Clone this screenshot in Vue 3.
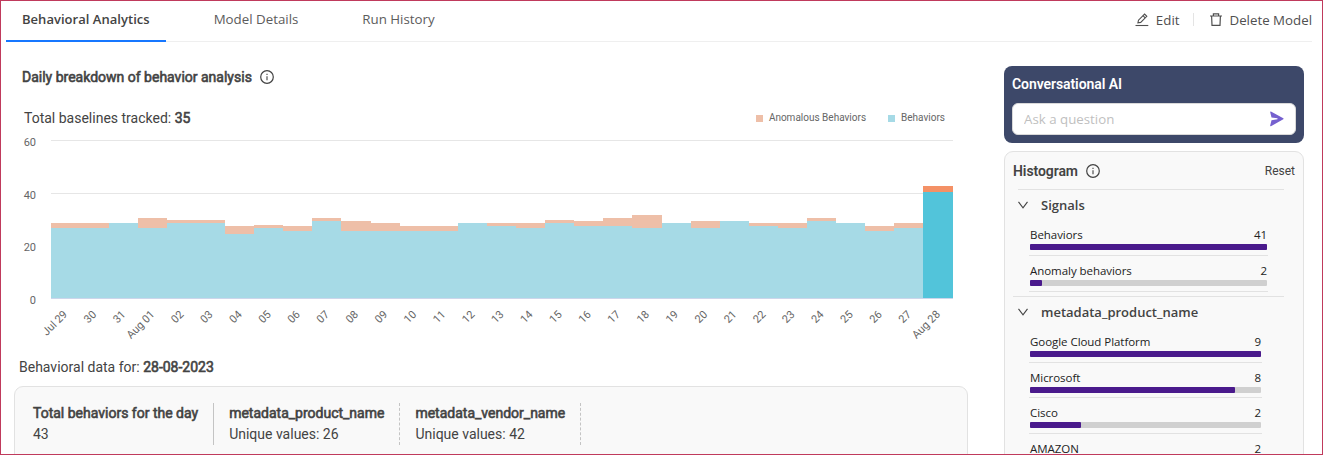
<script setup>
import { ref } from 'vue'

const tabs = ['Behavioral Analytics', 'Model Details', 'Run History']
const activeTab = ref(tabs[0])
const question = ref('')

// [label, behaviors, behaviors + anomalies]
const days = [
  ['Jul 29', 26.6, 28.5],
  ['30', 26.6, 28.5],
  ['31', 28.5, 28.5],
  ['Aug 01', 26.6, 30.4],
  ['02', 28.5, 29.6],
  ['03', 28.5, 29.6],
  ['04', 24.3, 27.3],
  ['05', 26.6, 27.7],
  ['06', 25.4, 27.3],
  ['07', 29.2, 30.4],
  ['08', 25.4, 29.2],
  ['09', 25.4, 28.5],
  ['10', 25.4, 27.3],
  ['11', 25.4, 27.3],
  ['12', 28.5, 28.5],
  ['13', 27.3, 28.5],
  ['14', 26.6, 28.5],
  ['15', 28.5, 29.6],
  ['16', 27.3, 29.2],
  ['17', 27.3, 30.4],
  ['18', 26.6, 31.5],
  ['19', 28.5, 28.5],
  ['20', 26.6, 29.2],
  ['21', 29.2, 29.2],
  ['22', 27.3, 28.5],
  ['23', 26.6, 28.5],
  ['24', 29.2, 30.4],
  ['25', 28.5, 28.5],
  ['26', 25.4, 27.3],
  ['27', 26.6, 28.5],
  ['Aug 28', 40.3, 42.5],
]

const plot = { left: 36, width: 902, base: 168, height: 158, max: 60 }
const band = plot.width / days.length

const toY = (v) => plot.base - Math.round((v / plot.max) * plot.height)
const toX = (i) => (i === days.length ? plot.left + plot.width : Math.floor(plot.left + i * band))

const bars = days.map(([label, behaviors, total], i) => ({
  label,
  x: toX(i),
  width: toX(i + 1) - toX(i),
  labelX: plot.left + (i + 0.5) * band + 2.4,
  behaviorsY: toY(behaviors),
  totalY: toY(total),
  active: i === days.length - 1,
}))

const ticks = [
  { label: '60', y: 10 },
  { label: '40', y: 63 },
  { label: '20', y: 115 },
  { label: '0', y: 168 },
]

const stats = [
  { title: 'Total behaviors for the day', value: '43' },
  { title: 'metadata_product_name', value: 'Unique values: 26' },
  { title: 'metadata_vendor_name', value: 'Unique values: 42' },
]

const groups = [
  {
    name: 'Signals',
    rows: [
      { label: 'Behaviors', count: 41, pct: 100 },
      { label: 'Anomaly behaviors', count: 2, pct: 5 },
    ],
  },
  {
    name: 'metadata_product_name',
    narrow: true,
    rows: [
      { label: 'Google Cloud Platform', count: 9, pct: 100 },
      { label: 'Microsoft', count: 8, pct: 88.8 },
      { label: 'Cisco', count: 2, pct: 22.1 },
      { label: 'AMAZON', count: 2, pct: 22.1 },
    ],
  },
]
</script>

<template>
  <div class="page">
    <!-- Tabs + actions -->
    <header class="topbar">
      <nav class="tabs" role="tablist">
        <button
          v-for="t in tabs"
          :key="t"
          class="tab"
          :class="{ 'tab--active': activeTab === t }"
          role="tab"
          :aria-selected="activeTab === t"
          @click="activeTab = t"
        >{{ t }}</button>
      </nav>
      <div class="actions">
        <button class="action">
          <svg width="14" height="14" viewBox="0 0 14 14" fill="none" stroke="currentColor" stroke-width="1.1">
            <path d="M0.5 12.5H13.3" />
            <path d="M2.9 9.9L3.5 7.2L9.6 1.1L11.8 3.3L5.7 9.4L2.9 9.9Z" />
            <path d="M8 2.7L10.2 4.9" />
          </svg>
          <span>Edit</span>
        </button>
        <span class="divider" />
        <button class="action">
          <svg width="12" height="14" viewBox="0 0 12 14" fill="none" stroke="currentColor" stroke-width="1.2">
            <path d="M0 3H12M3.4 3V0.9H8.6V3M1.6 3L2 12.3H10L10.4 3" />
          </svg>
          <span>Delete Model</span>
        </button>
      </div>
    </header>

    <div class="body">
      <!-- Chart column -->
      <main class="main">
        <h2 class="heading">
          <span>Daily breakdown of behavior analysis</span>
          <svg class="info" width="14" height="14" viewBox="0 0 14 14" fill="none" stroke="currentColor">
            <circle cx="7" cy="7" r="6.3" stroke-width="1.2" />
            <path d="M7 6.2V10.3M7 3.7V4.9" stroke-width="1.1" />
          </svg>
        </h2>

        <div class="chart-head">
          <p class="baselines">Total baselines tracked: <b>35</b></p>
          <ul class="legend">
            <li><i class="swatch swatch--anomalous" />Anomalous Behaviors</li>
            <li><i class="swatch swatch--behaviors" />Behaviors</li>
          </ul>
        </div>

        <svg class="chart" width="953" height="215" viewBox="0 0 953 215">
          <g shape-rendering="crispEdges">
            <rect v-for="t in ticks" :key="t.label" class="grid" x="36" :y="t.y" width="902" height="1" />
            <g v-for="b in bars" :key="b.label" :class="{ 'bar--active': b.active }">
              <rect class="bar-anomalous" :x="b.x" :y="b.totalY" :width="b.width" :height="b.behaviorsY - b.totalY" />
              <rect class="bar-behaviors" :x="b.x" :y="b.behaviorsY" :width="b.width" :height="plot.base - b.behaviorsY" />
            </g>
            <rect class="axis" x="36" y="168" width="902" height="1" />
          </g>
          <text v-for="t in ticks" :key="t.label" class="tick" x="21" :y="t.y + 5.5" text-anchor="end">{{ t.label }}</text>
          <text
            v-for="b in bars"
            :key="b.label"
            class="tick"
            text-anchor="end"
            :transform="`translate(${b.labelX} 185) rotate(-45)`"
          >{{ b.label }}</text>
        </svg>

        <p class="date">Behavioral data for: <b>28-08-2023</b></p>

        <section class="stats">
          <div v-for="s in stats" :key="s.title" class="stat">
            <b>{{ s.title }}</b>
            <span>{{ s.value }}</span>
          </div>
        </section>
      </main>

      <!-- Sidebar -->
      <aside class="side">
        <section class="ai">
          <h3 class="ai-title">Conversational AI</h3>
          <div class="ask">
            <input v-model="question" class="ask-input" placeholder="Ask a question" />
            <svg width="14" height="16" viewBox="0 0 14 16" fill="#7560cf">
              <path d="M0.9 0.5L13.3 7.2Q14 7.7 13.3 8.2L0.9 15.2Q0 15.5 0.2 14.5L1.5 9.2L7.5 8.3V7.2L1.5 6.4L0.2 1.2Q0 0.2 0.9 0.5Z" />
            </svg>
          </div>
        </section>

        <section class="hist">
          <div class="hist-head">
            <h3 class="hist-title">Histogram</h3>
            <svg class="info" width="14" height="14" viewBox="0 0 14 14" fill="none" stroke="currentColor">
              <circle cx="7" cy="7" r="6.3" stroke-width="1.2" />
              <path d="M7 6.2V10.3M7 3.7V4.9" stroke-width="1.1" />
            </svg>
            <button class="reset">Reset</button>
          </div>

          <div v-for="g in groups" :key="g.name" class="group" :class="{ 'group--narrow': g.narrow }">
            <div class="group-head">
              <svg width="10" height="8" viewBox="0 0 10 8" fill="none" stroke="currentColor" stroke-width="1.1">
                <path d="M0.5 0.8L5 6.8L9.5 0.8" />
              </svg>
              <span class="group-name">{{ g.name }}</span>
            </div>
            <div class="rows">
              <div v-for="r in g.rows" :key="r.label" class="row">
                <div class="row-text"><span>{{ r.label }}</span><span>{{ r.count }}</span></div>
                <div class="track"><div class="fill" :style="{ width: r.pct + '%' }" /></div>
              </div>
            </div>
          </div>
        </section>
      </aside>
    </div>
  </div>
</template>

<style>
body {
  background: #fff;
}
</style>

<style scoped>
.page {
  box-sizing: border-box;
  width: 1323px;
  height: 455px;
  border: 1px solid #c03a5c;
  overflow: hidden;
  background: #fff;
  color: #434343;
  font-family: Roboto, "Liberation Sans", sans-serif;
  font-size: 14px;
}

h2, h3, p, ul {
  margin: 0;
  padding: 0;
}

button {
  padding: 0;
  border: 0;
  background: none;
  color: inherit;
  font: inherit;
  cursor: pointer;
}

/* Top bar */
.topbar {
  display: flex;
  justify-content: space-between;
  box-sizing: border-box;
  height: 41px;
  margin: 0 10px 0 5px;
  border-bottom: 1px solid #efefef;
  font-family: "Open Sans", "Noto Sans", sans-serif;
  font-size: 13.3px;
}

.tabs {
  display: flex;
  gap: 32px;
}

.tab {
  box-sizing: border-box;
  height: 41px;
  padding: 0 16px 4px;
  border-bottom: 2px solid transparent;
  color: #5c5c5c;
  white-space: nowrap;
}

.tab--active {
  border-bottom-color: #1677ff;
  color: #434343;
  font-size: 13px;
  font-weight: 600;
  letter-spacing: 0.03px;
}

.actions {
  display: flex;
  align-items: center;
  height: 37px;
}

.action {
  display: flex;
  align-items: center;
  gap: 7px;
  color: #505050;
}

.divider {
  width: 1px;
  height: 13px;
  margin: 0 16px 0 14px;
  background: #e4e4e4;
}

/* Layout */
.body {
  display: flex;
  justify-content: space-between;
  padding: 0 18px 0 13px;
}

.main {
  width: 954px;
}

.heading {
  display: flex;
  align-items: center;
  gap: 8px;
  height: 20px;
  margin: 25px 0 0 8px;
  font-size: 14px;
}

/* Heavier strokes on the regular face keep its narrower widths */
.heading,
b {
  font-weight: 400;
  -webkit-text-stroke: 0.6px currentColor;
}

.info {
  color: #434343;
}

.chart-head {
  display: flex;
  justify-content: space-between;
  margin: 21px 23px 0 10px;
  height: 20px;
  line-height: 20px;
}

.legend {
  display: flex;
  gap: 22px;
  color: #666;
  font-size: 10px;
  list-style: none;
}

.legend li {
  display: flex;
  align-items: center;
}

.swatch {
  width: 7px;
  height: 7px;
  margin-right: 6px;
}

.swatch--anomalous { background: #eebfa8; }
.swatch--behaviors { background: #a6dae6; }

/* Chart */
.chart {
  display: block;
  margin: 2px 0 0 1px;
}

.grid { fill: #e6e6e6; }
.axis { fill: #ccd6eb; }
.bar-anomalous { fill: #eebfa8; }
.bar-behaviors { fill: #a6dae6; }
.bar--active .bar-anomalous { fill: #f49166; }
.bar--active .bar-behaviors { fill: #52c4da; }

.tick {
  fill: #666;
  font-size: 11px;
}

.date {
  height: 20px;
  margin: 12px 0 0 5px;
  line-height: 20px;
}

/* Day stats */
.stats {
  display: flex;
  box-sizing: border-box;
  height: 100px;
  margin-top: 9px;
  padding: 16px 18px;
  border: 1px solid #e2e2e2;
  border-radius: 9px;
  background: #f9f9f9;
}

.stat {
  display: flex;
  flex-direction: column;
  height: 42px;
  margin-right: 15px;
  padding-right: 15px;
  border-right: 1px dashed #c4c4c4;
  line-height: 21px;
}

.stat:first-child {
  border-right-style: solid;
}

/* Conversational AI */
.side {
  width: 300px;
  padding-top: 24px;
}

.ai {
  box-sizing: border-box;
  height: 77px;
  padding: 8px;
  border-radius: 8px;
  background: #3d4869;
}

.ai-title {
  height: 20px;
  color: #fff;
  font-size: 14px;
  font-weight: 600;
  line-height: 20px;
  letter-spacing: -0.08px;
}

.ask {
  display: flex;
  align-items: center;
  box-sizing: border-box;
  height: 32px;
  margin-top: 9px;
  padding: 0 11px;
  border: 1px solid #d9d9d9;
  border-radius: 6px;
  background: #fff;
}

.ask-input {
  flex: 1;
  min-width: 0;
  padding: 0;
  border: 0;
  outline: 0;
  font-family: "Open Sans", "Noto Sans", sans-serif;
  font-size: 13.3px;
}

.ask-input::placeholder {
  color: #bfbfbf;
}

/* Histogram */
.hist {
  box-sizing: border-box;
  height: 330px;
  margin-top: 8px;
  padding: 0 8px;
  border: 1px solid #e2e2e2;
  border-radius: 9px;
  background: #f9f9f9;
}

.hist-head {
  display: flex;
  align-items: center;
  gap: 8px;
  height: 37px;
}

.hist-title {
  font-size: 14px;
  font-weight: 600;
  letter-spacing: -0.08px;
}

.reset {
  margin-left: auto;
  font-size: 12px;
}

.group {
  font-family: "Open Sans", "Noto Sans", sans-serif;
  margin-right: 11px;
}

.group-head {
  display: flex;
  align-items: center;
  gap: 13px;
  box-sizing: border-box;
  height: 31px;
  margin-left: 5px;
  border-top: 1px solid #e2e2e2;
}

.group--narrow {
  margin-top: 4px;
  border-top: 1px solid #e2e2e2;
}

.group--narrow .group-head {
  height: 30px;
  border-top: 0;
}

.group-name {
  font-size: 13px;
  font-weight: 600;
}

.rows {
  margin: 0 16px;
}

.group--narrow .rows {
  margin-right: 22px;
}

.row {
  box-sizing: border-box;
  height: 36px;
  padding: 5px 1px 0;
  border-bottom: 1px solid #e2e2e2;
  color: #222;
  font-size: 11.5px;
  letter-spacing: -0.05px;
}

.group--narrow .row {
  height: 35.6px;
}

.row-text {
  display: flex;
  justify-content: space-between;
  height: 19px;
  line-height: 19px;
}

.track {
  height: 6px;
  border-radius: 1px;
  background: #d0d0d0;
}

.fill {
  height: 6px;
  border-radius: 1px;
  background: #4a1a8c;
}
</style>
